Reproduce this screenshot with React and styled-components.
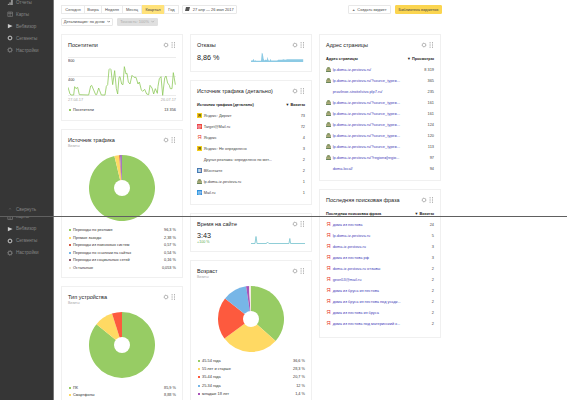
import React from 'react';
import styled, { createGlobalStyle } from 'styled-components';

const GlobalStyle = createGlobalStyle`
  * {
    box-sizing: border-box;
  }

  body {
    margin: 0;
    overflow: hidden;
    background: #fff;
    font-family: "Liberation Sans", Arial, sans-serif;
    font-size: 3.85px;
    color: #333;
  }

  svg {
    display: block;
    flex: none;
  }
`;

const Page = styled.div`
  position: relative;
  display: flex;
  width: 567px;
  height: 400px;
  overflow: hidden;
`;

const Seam = styled.div`
  position: absolute;
  left: 0;
  right: 0;
  top: 216px;
  height: 1px;
  background: #606060;
`;

const Sidebar = styled.nav`
  flex: none;
  width: 54px;
  background: #363636;
  border-right: 1px solid #777;
`;

const MenuPart = styled.div`
  display: flex;
  flex-direction: column;
  height: ${props => props.$height};
  overflow: hidden;
`;

const MenuList = styled.div`
  margin-top: ${props => props.$shift};
`;

const MenuItem = styled.div`
  display: flex;
  align-items: center;
  gap: 3px;
  height: 12px;
  padding-left: 7px;
  font-size: 4.6px;
  color: #858585;
  white-space: nowrap;
`;

const Collapse = styled(MenuItem)`
  margin-top: auto;
  margin-bottom: 1px;
`;

const Main = styled.main`
  flex: 1;
  padding: 4.5px 0 0 7px;
`;

const Toolbar = styled.div`
  display: flex;
  width: 381px;
  height: 9px;
`;

const SubToolbar = styled.div`
  display: flex;
  gap: 4px;
  margin-top: 4px;
  height: 8.5px;
`;

const Periods = styled.div`
  display: flex;
  margin-right: 3px;
  border: 1px solid #eaeaea;
`;

const Period = styled.div`
  display: flex;
  align-items: center;
  justify-content: center;
  width: ${props => props.$width}px;
  margin: -1px 0;
  font-size: 4px;
  color: #444;
  border-right: 1px solid #eaeaea;
  background: ${props => (props.$active ? '#ffe27a' : 'transparent')};

  &:last-child {
    border-right: 0;
  }
`;

const Button = styled.div`
  display: flex;
  align-items: center;
  justify-content: center;
  gap: 2.5px;
  width: ${props => props.$width}px;
  font-size: 3.95px;
  white-space: nowrap;
  border: 1px solid ${props => (props.$yellow ? '#fbd550' : '#e8e8e8')};
  border-radius: 1px;
  background: ${props => (props.$yellow ? '#fbd550' : '#fff')};
  color: #444;
`;

const DisabledButton = styled(Button)`
  background: #e0e0e0;
  border-color: #e0e0e0;
  color: #aaa;
`;

const Actions = styled.div`
  display: flex;
  gap: 4px;
  margin-left: auto;
`;

const Columns = styled.div`
  display: flex;
  gap: 7px;
  margin-top: 7.5px;
`;

const Column = styled.div`
  display: flex;
  flex-direction: column;
  gap: 8px;
  width: 122px;
`;

const Card = styled.section`
  height: ${props => props.$height}px;
  padding: 6px 6px 0;
  border: 1px solid #f0f0f0;
`;

const CardHead = styled.div`
  display: flex;
  align-items: center;
  height: 8px;
`;

const Title = styled.h2`
  flex: 1;
  margin: 0;
  font-size: 5.5px;
  font-weight: 400;
  color: #222;
  white-space: nowrap;
`;

const Sub = styled.div`
  height: 5px;
  line-height: 5px;
  font-size: 3.4px;
  color: #aaa;
`;

const Legend = styled.div`
  margin-top: ${props => props.$gap}px;
`;

const LegendRow = styled.div`
  display: flex;
  align-items: center;
  height: ${props => props.$height || 7.5}px;
  color: #333;
  white-space: nowrap;
`;

const Dot = styled.span`
  width: 2px;
  height: 2px;
  margin: 0 2.5px 0 0.5px;
  background: ${props => props.$color};
`;

const Name = styled.span`
  flex: 1;
`;

const Axis = styled.div`
  display: flex;
  justify-content: space-between;
  height: 8px;
  line-height: 8px;
  font-size: 3.9px;
  color: #aaa;
`;

const ChartBox = styled.div`
  display: flex;
  justify-content: center;
  margin-top: ${props => props.$gap}px;
`;

const Metric = styled.div`
  display: flex;
  justify-content: space-between;
  align-items: flex-end;
  margin-top: 2.5px;
`;

const Value = styled.div`
  font-size: 7.2px;
  line-height: 9px;
  color: #222;
`;

const Growth = styled.div`
  font-size: 3.7px;
  line-height: 5px;
  color: #5aad4c;
`;

const TableHead = styled.div`
  display: flex;
  justify-content: space-between;
  align-items: center;
  height: 9.5px;
  margin-top: 5.5px;
  font-size: 3.85px;
  font-weight: 700;
  color: #222;
  white-space: nowrap;
`;

const TableRow = styled.div`
  display: flex;
  align-items: center;
  height: 11.06px;
  font-size: 3.9px;
  color: ${props => (props.$link ? '#4540b8' : '#444')};
  white-space: nowrap;
`;

const Icon = styled.span`
  display: flex;
  align-items: center;
  justify-content: center;
  width: 5px;
  height: 5px;
  margin-right: 1.7px;
  font-size: ${props => (props.$color ? 4 : 5.8)}px;
  font-weight: ${props => (props.$color ? 700 : 400)};
  line-height: 5px;
  color: ${props => (props.$color ? props.$ink || '#fff' : '#e8392c')};
  background: ${props => props.$color || 'transparent'};
`;

const Count = styled.span`
  color: #444;
`;

const Tools = () => (
  <svg width="22" height="8" viewBox="0 0 22 8" fill="none">
    <circle cx="12" cy="4" r="1.7" stroke="#999" strokeWidth="0.6" />
    <circle cx="12" cy="4" r="2.2" stroke="#aaa" strokeWidth="0.6" strokeDasharray="0.65 1.08" />
    <path d="M17.6 1.8h1M17.6 4h1M17.6 6.2h1M20 1.8h1M20 4h1M20 6.2h1" stroke="#888" strokeWidth="0.9" />
  </svg>
);

const Header = ({ children }) => (
  <CardHead>
    <Title>{children}</Title>
    <Tools />
  </CardHead>
);

const menuShapes = {
  reports: <path d="M1 5h.8v1H1zM2.6 3.6h.9V6h-.9zM4.3 1h1.2v5H4.3z" fill="#aaa" stroke="#aaa" strokeWidth=".3" />,
  maps: <path d="M.8 1h4.7v4.4H.8zM.8 2.3h4.7M3.1 1v4.4" stroke="#858585" strokeWidth=".6" />,
  play: <path d="M.9.9L5.6 3 .9 5.2z" fill="#ccc" />,
  ring: <circle cx="3" cy="3" r="1.9" stroke="#c8c8c8" strokeWidth="1" />,
  gear: (
    <>
      <circle cx="3" cy="3" r="1.9" stroke="#999" strokeWidth=".7" />
      <circle cx="3" cy="3" r="2.5" stroke="#888" strokeWidth=".5" strokeDasharray=".8 1.16" />
    </>
  ),
  up: <path d="M2.2 3.4L3 2.3l.8 1.1" stroke="#777" strokeWidth=".5" />,
};

const MenuIcon = ({ name }) => (
  <svg width="6" height="6" viewBox="0 0 6 6" fill="none">
    {menuShapes[name]}
  </svg>
);

const menu = [
  ['reports', 'Отчеты'],
  ['maps', 'Карты'],
  ['play', 'Вебвизор'],
  ['ring', 'Сегменты'],
  ['gear', 'Настройки'],
];

const Menu = ({ items }) =>
  items.map(([icon, label]) => (
    <MenuItem key={label}>
      <MenuIcon name={icon} />
      {label}
    </MenuItem>
  ));

const Chevron = () => (
  <svg width="3.4" height="3" viewBox="0 0 3.4 3" fill="none">
    <path d="M.3.8l1.4 1.4L3.1.8" stroke="currentColor" strokeWidth=".6" />
  </svg>
);

const House = () => (
  <svg width="5" height="5" viewBox="0 0 5 5">
    <path d="M.2 2.2L1.6 0h1.8l1.4 2.2V5H.2z" fill="#8b9a6a" />
    <path d="M1 2.6h3v1H1z" fill="#c5b580" />
    <path d="M0 4.2h5V5H0z" fill="#5f8055" />
  </svg>
);

const point = (share, r) => {
  const a = share * Math.PI * 2;
  return `${33 + r * Math.sin(a)} ${33 - r * Math.cos(a)}`;
};

const Donut = ({ slices }) => {
  let from = 0;
  return (
    <svg width="66" height="66" viewBox="0 0 66 66">
      {slices.map(([color, share]) => {
        const to = from + share / 100;
        const large = share > 50 ? 1 : 0;
        const d = `M33 33L${point(from, 33)}A33 33 0 ${large} 1 ${point(to, 33)}Z`;
        from = to;
        return <path key={color} d={d} fill={color} />;
      })}
      <circle cx="33" cy="33" r="8" fill="#fff" />
    </svg>
  );
};

const visitors = `0,94 6,114 9,117 17,117 20,92 24,98 29,94 34,116 62,117 68,90 71,88 77,102
  83,116 86,116 92,96 95,104 100,117 111,117 115,91 119,86 123,41 126,38 129,41 134,86
  140,44 145,98 149,114 153,64 156,62 161,84 165,86 169,32 174,54 177,52 181,78 186,84
  192,58 198,64 204,64 210,84 214,78 220,102 224,106 230,100 236,114 242,116 246,88
  252,96 257,114 262,98 268,112 270,91 274,68 279,62 284,118 290,66 294,60 299,81
  304,88 307,98 312,98 316,50 322,86`;

const VisitorsChart = () => (
  <svg width="108" height="40" viewBox="0 0 324 120" fill="none">
    <path d="M0 4.5h324M0 61.5h324M0 118.5h324" stroke="#ececec" strokeWidth="3" />
    <text x="0" y="18" fontSize="11.5" fill="#333">800</text>
    <text x="0" y="75" fontSize="11.5" fill="#333">400</text>
    <polyline points={visitors} stroke="#8ec95b" strokeWidth="2.4" />
  </svg>
);

const BounceChart = () => (
  <svg width="54" height="11" viewBox="0 1 54 11">
    <path
      d="M0 12V10.6h1.5l1-1.8.7 2 1.2-.6.6.6h5l.8-8 1 1 .8 5 .8 1.8 1.5-1 1 .7.7-3.6.8 3.5 1.3.5.8-2 .7 1.8h6l1-.7h4l1-.5 2 .5 2-.5h16V12z"
      fill="#8ccae4"
    />
  </svg>
);

const TimeChart = () => (
  <svg width="54" height="12" viewBox="0 0 54 12" fill="none">
    <path
      d="M0 10.5h4l1-7 1 7h9.5l1-1.5 1.4 1.5H38l.8-5 .8 5H54"
      stroke="#83c8d3"
      strokeWidth=".9"
    />
  </svg>
);

const LegendList = ({ gap, rows, height }) => (
  <Legend $gap={gap}>
    {rows.map(([color, label, value]) => (
      <LegendRow key={label} $height={height}>
        <Dot $color={color} />
        <Name>{label}</Name>
        <span>{value}</span>
      </LegendRow>
    ))}
  </Legend>
);

const sources = [
  ['#97cc64', 'Переходы по рекламе', '96,3 %'],
  ['#ffd963', 'Прямые заходы', '2,38 %'],
  ['#d55b45', 'Переходы из поисковых систем', '0,57 %'],
  ['#77b6e7', 'Переходы по ссылкам на сайтах', '0,54 %'],
  ['#955f71', 'Переходы из социальных сетей', '0,16 %'],
  ['#eee3cf', 'Остальные', '0,053 %'],
];

const ages = [
  ['#97cc64', '45-54 года', '36,6 %'],
  ['#ffd963', '55 лет и старше', '28,3 %'],
  ['#fd5a3e', '35-44 года', '20,7 %'],
  ['#77b6e7', '25-34 года', '12 %'],
  ['#a955b8', 'младше 18 лет', '1,4 %'],
];

const traffic = [
  ['direct', 'Яндекс: Директ', 73],
  ['target', 'Target@Mail.ru', 72],
  ['yandex', 'Яндекс', 4],
  ['direct', 'Яндекс: Не определено', 3],
  ['', 'Другая реклама: определено по мет...', 2],
  ['vk', 'ВКонтакте', 2],
  ['house', 'lp.doma-iz-pestova.ru', 1],
  ['mail', 'Mail.ru', 1],
];

const address = 'lp.doma-iz-pestova.ru/?source_type=...';

const pages = [
  ['house', 'lp.doma-iz-pestova.ru/', '8 319'],
  ['house', address, 365],
  ['', 'pravilnoe-stroitelstvo.plp7.ru/', 235],
  ['house', address, 161],
  ['house', address, 161],
  ['house', address, 124],
  ['house', address, 120],
  ['house', address, 113],
  ['house', 'lp.doma-iz-pestova.ru/?region=[regio...', 97],
  ['', 'doma.local/', 94],
];

const phrases = [
  ['yandex', 'дома из пестова', 24],
  ['yandex', 'lp.doma-iz-pestova.ru', 5],
  ['yandex', 'doma-iz-pestova.ru', 3],
  ['yandex', 'дома из пестова рф', 3],
  ['yandex', 'doma-iz-pestova.ru отзывы', 2],
  ['yandex', 'geon53@mail.ru', 2],
  ['yandex', 'дома из бруса из пестова', 2],
  ['yandex', 'дома из бруса из пестова под усадк...', 2],
  ['yandex', 'дома из пестова из бруса', 2],
  ['yandex', 'дома из пестова под материнский к...', 2],
];

const SourceIcon = ({ name }) => {
  switch (name) {
    case 'house':
      return <Icon><House /></Icon>;
    case 'direct':
      return <Icon $color="#f5cf1c" $ink="#4d3d10">Я</Icon>;
    case 'target':
      return <Icon $color="#ed4545">@</Icon>;
    case 'vk':
      return <Icon $color="#4b78ad">В</Icon>;
    case 'mail':
      return <Icon $color="#2f8fdc">@</Icon>;
    case 'yandex':
      return <Icon>Я</Icon>;
    default:
      return <Icon />;
  }
};

const Table = ({ rows, link }) =>
  rows.map(([icon, label, count], i) => (
    <TableRow key={i} $link={link}>
      <SourceIcon name={icon} />
      <Name>{label}</Name>
      <Count>{count}</Count>
    </TableRow>
  ));

const App = () => (
  <Page>
    <GlobalStyle />
    <Sidebar>
      <MenuPart $height="216px">
        <MenuList $shift="-4px">
          <Menu items={menu} />
        </MenuList>
        <Collapse>
          <MenuIcon name="up" />
          Свернуть
        </Collapse>
      </MenuPart>
      <MenuPart $height="184px">
        <MenuList $shift="-5.5px">
          <Menu items={menu.slice(1)} />
        </MenuList>
      </MenuPart>
    </Sidebar>
    <Main>
      <Toolbar>
        <Periods>
          <Period $width={23}>Сегодня</Period>
          <Period $width={17}>Вчера</Period>
          <Period $width={21}>Неделя</Period>
          <Period $width={19}>Месяц</Period>
          <Period $width={23} $active>Квартал</Period>
          <Period $width={13}>Год</Period>
        </Periods>
        <Button $width={55}>
          <svg width="5" height="4" viewBox="0 0 5 4">
            <path d="M1 0h4L4 4H0z" fill="#555" />
          </svg>
          27 апр — 26 июл 2017
        </Button>
        <Actions>
          <Button $width={43}>
            <b>+</b>
            Создать виджет
          </Button>
          <Button $width={47} $yellow>Библиотека виджетов</Button>
        </Actions>
      </Toolbar>
      <SubToolbar>
        <Button $width={52}>
          Детализация: по дням
          <Chevron />
        </Button>
        <DisabledButton $width={41}>
          Точность: 100%
          <Chevron />
        </DisabledButton>
      </SubToolbar>

      <Columns>
        <Column>
          <Card $height={87}>
            <Header>Посетители</Header>
            <ChartBox $gap={7}>
              <VisitorsChart />
            </ChartBox>
            <Axis>
              <span>27.04.17</span>
              <span>26.07.17</span>
            </Axis>
            <LegendList gap={2.5} rows={[['#97cc64', 'Посетители', '13 356']]} />
          </Card>
          <Card $height={149}>
            <Header>Источник трафика</Header>
            <Sub>Визиты</Sub>
            <ChartBox $gap={6}>
              <Donut
                slices={[
                  ['#97cc64', 96.3],
                  ['#ffd963', 2.2],
                  ['#e8805a', 0.5],
                  ['#a678bd', 1],
                ]}
              />
            </ChartBox>
            <LegendList gap={6} rows={sources} />
          </Card>
          <Card $height={150}>
            <Header>Тип устройства</Header>
            <Sub>Визиты</Sub>
            <ChartBox $gap={6}>
              <Donut
                slices={[
                  ['#97cc64', 85.9],
                  ['#ffd963', 9.2],
                  ['#fd5a3e', 4.9],
                ]}
              />
            </ChartBox>
            <LegendList
              gap={6.3}
              rows={[
                ['#97cc64', 'ПК', '85,9 %'],
                ['#ffd963', 'Смартфоны', '8,88 %'],
              ]}
            />
          </Card>
        </Column>

        <Column>
          <Card $height={38.5}>
            <Header>Отказы</Header>
            <Metric>
              <Value>8,86 %</Value>
              <BounceChart />
            </Metric>
          </Card>
          <Card $height={125}>
            <Header>Источник трафика (детально)</Header>
            <TableHead>
              <span>Источник трафика (детально)</span>
              <span>▼ Визиты</span>
            </TableHead>
            <Table rows={traffic} />
          </Card>
          <Card $height={38.5}>
            <Header>Время на сайте</Header>
            <Metric>
              <div>
                <Value>3:43</Value>
                <Growth>+100 %</Growth>
              </div>
              <TimeChart />
            </Metric>
          </Card>
          <Card $height={160}>
            <Header>Возраст</Header>
            <Sub>Визиты</Sub>
            <ChartBox $gap={6}>
              <Donut
                slices={[
                  ['#97cc64', 36.6],
                  ['#ffd963', 28.3],
                  ['#fd5a3e', 20.7],
                  ['#77b6e7', 12],
                  ['#a955b8', 1.4],
                  ['#f3ecdf', 1],
                ]}
              />
            </ChartBox>
            <LegendList gap={5.2} rows={ages} height={8.25} />
          </Card>
        </Column>

        <Column>
          <Card $height={147.5}>
            <Header>Адрес страницы</Header>
            <TableHead>
              <span>Адрес страницы</span>
              <span>▼ Просмотры</span>
            </TableHead>
            <Table rows={pages} link />
          </Card>
          <Card $height={148.5}>
            <Header>Последняя поисковая фраза</Header>
            <TableHead>
              <span>Последняя поисковая фраза</span>
              <span>▼ Визиты</span>
            </TableHead>
            <Table rows={phrases} link />
          </Card>
        </Column>
      </Columns>
    </Main>
    <Seam />
  </Page>
);

export default App;
